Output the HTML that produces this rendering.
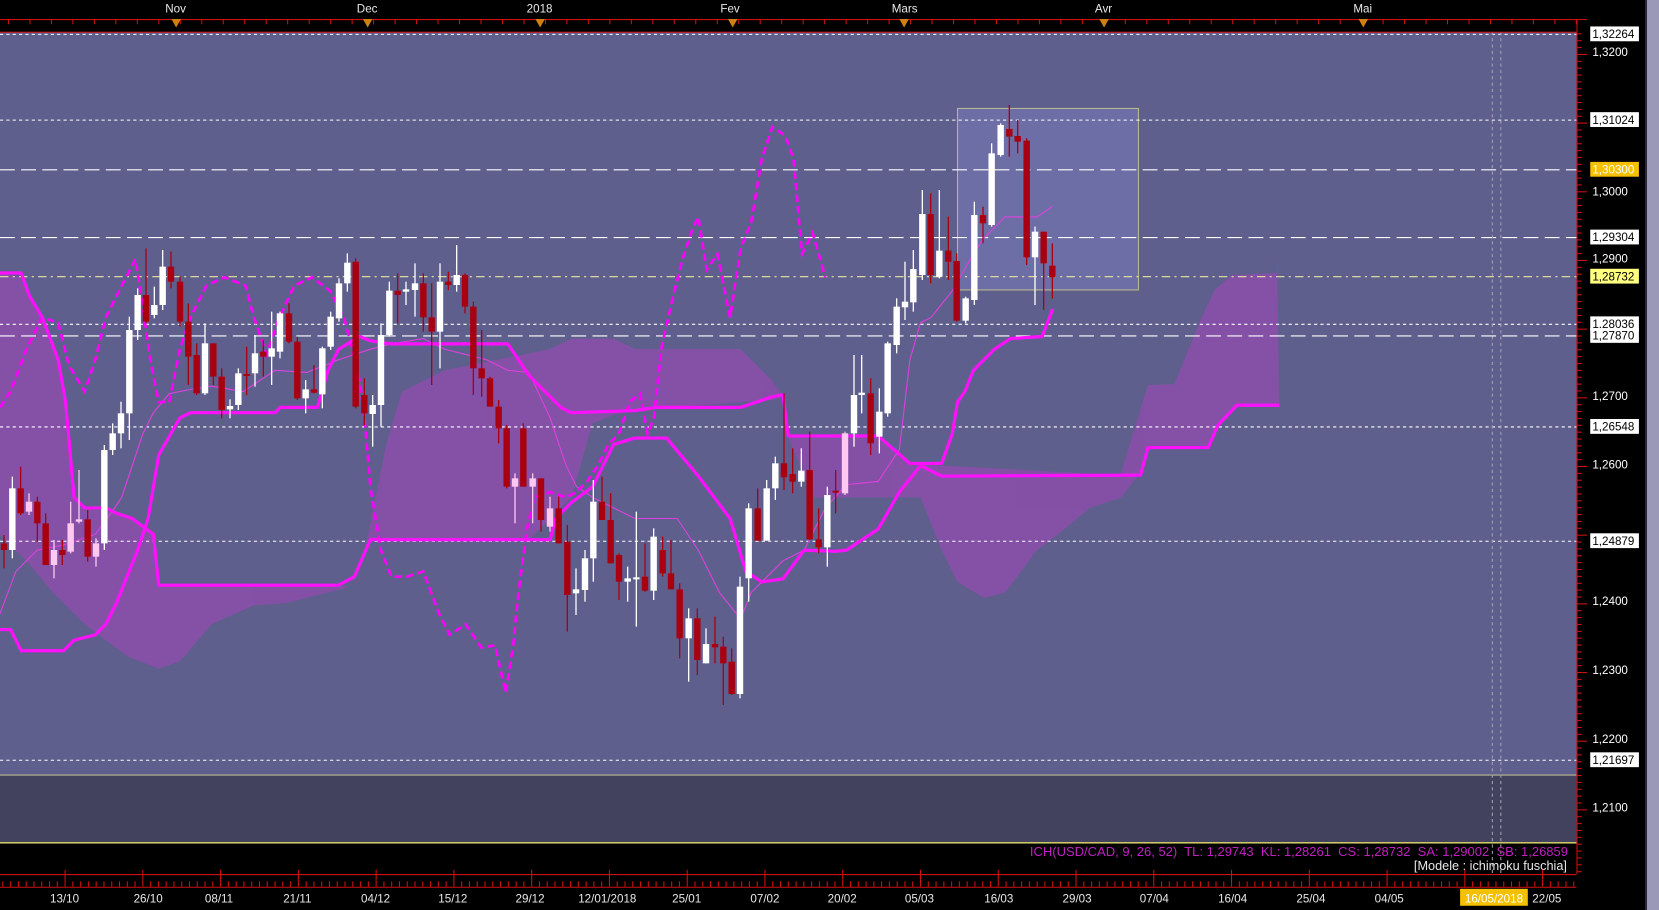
<!DOCTYPE html>
<html><head><meta charset="utf-8"><style>
html,body{margin:0;padding:0;background:#000;width:1659px;height:910px;overflow:hidden}
svg{display:block;font-family:"Liberation Sans","DejaVu Sans",sans-serif}
</style></head><body>
<svg id="s" width="1659" height="910" xmlns="http://www.w3.org/2000/svg">
<rect width="1659" height="910" fill="#000"/>
<rect x="1647" y="0" width="12" height="910" fill="#9a9ab8"/>
<rect x="1645" y="0" width="2" height="910" fill="#2a2a3a"/>
<g transform="scale(1.05804,1.05814)">
<rect x="0" y="30" width="1490" height="702" fill="#5f5f8e"/>
<rect x="0" y="732" width="1490" height="64" fill="#42425f"/>
<line x1="0" y1="732.5" x2="1490" y2="732.5" stroke="#b8b890" stroke-width="1"/>
<line x1="0" y1="796.5" x2="1490" y2="796.5" stroke="#e6e070" stroke-width="1.2"/>
<rect x="905" y="102.5" width="171" height="171.5" fill="#6e6ea6" stroke="#b8b890" stroke-width="1"/>
<g fill="#8650a8" opacity="0.95">
<polygon points="0,258 20,262 40,300 55,340 62,380 70,470 80,480 110,485 125,490 145,505 150,553 250,553 320,553 330,555 310,560 270,570 240,572 200,590 170,625 150,632 120,620 80,590 50,560 25,530 0,505"/>
<polygon points="330,555 345,520 355,470 365,420 380,370 420,350 480,338 520,330 540,320 580,320 600,330 700,330 730,360 740,375 730,378 620,386 580,392 560,400 540,470 520,490 500,510 350,510"/>
<polygon points="745,412 800,410 830,412 860,438 890,440 1075,450 1060,470 1030,480 1000,505 980,520 950,560 930,565 905,550 890,520 870,470 840,470 800,470 770,470 760,450"/>
<polygon points="1059,449 1085,364 1110,363 1134,304 1148,274 1164,260 1208,258 1207,244 1209,383 1169,383 1151,402 1142,423 1085,423 1078,449"/>
</g>
<g stroke="#fff" stroke-width="1" fill="none">
<line x1="0" y1="32.5" x2="1490" y2="32.5" stroke-dasharray="3,3"/>
<line x1="0" y1="113.5" x2="1490" y2="113.5" stroke-dasharray="3,3"/>
<line x1="0" y1="160.5" x2="1490" y2="160.5" stroke-dasharray="14,6"/>
<line x1="0" y1="224.5" x2="1490" y2="224.5" stroke-dasharray="14,6"/>
<line x1="0" y1="261.5" x2="1490" y2="261.5" stroke="#e8e8a0" stroke-dasharray="8,4,2,4"/>
<line x1="0" y1="306.5" x2="1490" y2="306.5" stroke-dasharray="3,3"/>
<line x1="0" y1="317.5" x2="1490" y2="317.5" stroke-dasharray="14,6"/>
<line x1="0" y1="403.5" x2="1490" y2="403.5" stroke-dasharray="3,3"/>
<line x1="0" y1="511.5" x2="1490" y2="511.5" stroke-dasharray="3,3"/>
<line x1="0" y1="718.5" x2="1490" y2="718.5" stroke-dasharray="3,3"/>
</g>
<g stroke="#a0a0b0" stroke-width="1" stroke-dasharray="3,3">
<line x1="1410.5" y1="30" x2="1410.5" y2="826"/>
<line x1="1418.5" y1="30" x2="1418.5" y2="826"/>
</g>
<polyline fill="none" stroke="#e040e0" stroke-width="1" points="0,580 15,540 35,520 60,515 90,505 105,485 115,470 125,440 135,410 145,390 160,372 180,368 200,365 230,370 260,350 290,352 320,340 350,330 370,325 400,320 420,330 460,340 480,350 500,352 520,395 535,440 545,460 560,470 580,480 600,490 640,490 660,520 680,560 700,585 710,560 720,550 740,530 760,520 780,480 800,458 830,455 850,425 860,340 870,305 880,300 900,275 920,240 930,225 950,205 980,205 995,195"/>
<polyline fill="none" stroke="#ff00ff" stroke-width="2.5" stroke-dasharray="7,4" points="0,385 10,370 25,330 40,300 55,305 65,345 80,370 90,340 100,300 115,270 128,245 135,290 142,340 150,380 160,380 170,330 180,300 195,270 212,262 232,270 240,300 252,335 262,305 278,270 295,262 312,275 325,300 333,330 340,360 345,400 350,460 355,490 360,520 370,545 385,545 400,540 415,580 425,600 440,590 455,612 468,610 478,655 485,610 490,560 498,500 505,470 520,465 535,470 545,465 555,455 565,440 575,420 585,410 595,380 605,372 612,410 618,395 625,330 635,285 645,245 655,215 660,205 668,255 678,240 690,300 700,235 710,210 720,150 730,120 742,128 750,150 758,240 768,220 780,262"/>
<polyline fill="none" stroke="#ff10ff" stroke-width="3" stroke-linejoin="round" points="0,258 20,258 28,280 40,300 55,340 62,380 70,470 80,480 100,480 110,485 125,490 145,505 150,553 320,553 335,545 350,510 520,510 525,490 540,475 560,460 570,440 580,420 600,414 630,414 660,450 690,490 705,540 720,550 740,547 760,520 790,521 800,520 830,500 850,465 870,440 890,450 1078,449 1085,423 1142,423 1151,402 1169,383 1209,383"/>
<polyline fill="none" stroke="#ff10ff" stroke-width="3" stroke-linejoin="round" points="0,595 10,595 20,615 60,615 70,605 90,600 100,590 110,570 120,545 130,520 140,490 150,430 170,395 180,390 260,390 265,385 300,385 310,350 320,330 340,318 350,322 370,325 480,325 490,340 500,355 510,365 530,385 540,390 600,388 620,385 700,385 730,375 740,373 745,412 830,412 860,438 890,438 900,410 905,380 912,370 920,350 930,340 940,330 955,320 985,318 995,292"/>
</g>
<g id="candles"></g>
<g transform="scale(1.05804,1.05814)">
<rect x="0" y="0" width="1505" height="30" fill="#000"/>
<line x1="0" y1="18.5" x2="1490" y2="18.5" stroke="#d01010"/>
<line x1="0" y1="30.5" x2="1490" y2="30.5" stroke="#d01010"/>
<g id="ttick" stroke="#d01010"></g>
<g fill="#e8e8e8" font-size="11" text-anchor="middle">
<text x="166" y="12">Nov</text><text x="347" y="12">Dec</text><text x="510" y="12">2018</text><text x="690" y="12">Fev</text><text x="855" y="12">Mars</text><text x="1043" y="12">Avr</text><text x="1288" y="12">Mai</text>
</g>
<g fill="#d08010">
<polygon points="162,18 171,18 166.5,26"/><polygon points="343,18 352,18 347.5,26"/><polygon points="506,18 515,18 510.5,26"/><polygon points="688,18 697,18 692.5,26"/><polygon points="850,18 859,18 854.5,26"/><polygon points="1039,18 1048,18 1043.5,26"/><polygon points="1284,18 1293,18 1288.5,26"/>
</g>
<rect x="1490" y="18" width="58" height="842" fill="#000"/>
<line x1="1490.5" y1="18" x2="1490.5" y2="826" stroke="#d01010"/>
<line x1="1490" y1="18.5" x2="1500" y2="18.5" stroke="#d01010"/>
<g id="rtick" stroke="#d01010"></g>
<g font-size="11">
<rect x="1503" y="25" width="46" height="14" fill="#fff"/><text x="1505" y="36" fill="#000">1,32264</text>
<text x="1505" y="53" fill="#fff">1,3200</text>
<rect x="1503" y="106" width="46" height="14" fill="#fff"/><text x="1505" y="117" fill="#000">1,31024</text>
<rect x="1503" y="153" width="46" height="14" fill="#f5c000"/><text x="1505" y="164" fill="#fff">1,30300</text>
<text x="1505" y="185" fill="#fff">1,3000</text>
<rect x="1503" y="217" width="46" height="14" fill="#fff"/><text x="1505" y="228" fill="#000">1,29304</text>
<text x="1505" y="248" fill="#fff">1,2900</text>
<rect x="1503" y="254" width="46" height="14" fill="#ffff80"/><text x="1505" y="265" fill="#000">1,28732</text>
<rect x="1503" y="299" width="46" height="14" fill="#fff"/><text x="1505" y="310" fill="#000">1,28036</text>
<rect x="1503" y="310" width="46" height="14" fill="#fff"/><text x="1505" y="321" fill="#000">1,27870</text>
<text x="1505" y="378" fill="#fff">1,2700</text>
<rect x="1503" y="396" width="46" height="14" fill="#fff"/><text x="1505" y="407" fill="#000">1,26548</text>
<text x="1505" y="443" fill="#fff">1,2600</text>
<rect x="1503" y="504" width="46" height="14" fill="#fff"/><text x="1505" y="515" fill="#000">1,24879</text>
<text x="1505" y="572" fill="#fff">1,2400</text>
<text x="1505" y="637" fill="#fff">1,2300</text>
<text x="1505" y="702" fill="#fff">1,2200</text>
<rect x="1503" y="711" width="46" height="14" fill="#fff"/><text x="1505" y="722" fill="#000">1,21697</text>
<text x="1505" y="767" fill="#fff">1,2100</text>
</g>
<text x="1482" y="809" font-size="12.3" fill="#c020c0" text-anchor="end" xml:space="preserve">ICH(USD/CAD, 9, 26, 52)  TL: 1,29743  KL: 1,28261  CS: 1,28732  SA: 1,29002  SB: 1,26859</text>
<text x="1481" y="822" font-size="12" fill="#e8e8e8" text-anchor="end">[Modele : ichimoku fuschia]</text>
<line x1="0" y1="826.5" x2="1490" y2="826.5" stroke="#d01010"/>
<line x1="0" y1="838.5" x2="1490" y2="838.5" stroke="#d01010"/>
<g id="btick" stroke="#d01010"></g>
<rect x="1380" y="840" width="64" height="16" fill="#f5c000"/>
<g fill="#e8e8e8" font-size="11" text-anchor="middle">
<text x="61" y="853">13/10</text><text x="140" y="853">26/10</text><text x="207" y="853">08/11</text><text x="281" y="853">21/11</text><text x="355" y="853">04/12</text><text x="428" y="853">15/12</text><text x="501" y="853">29/12</text><text x="574" y="853">12/01/2018</text><text x="649" y="853">25/01</text><text x="723" y="853">07/02</text><text x="796" y="853">20/02</text><text x="869" y="853">05/03</text><text x="944" y="853">16/03</text><text x="1018" y="853">29/03</text><text x="1091" y="853">07/04</text><text x="1165" y="853">16/04</text><text x="1239" y="853">25/04</text><text x="1313" y="853">04/05</text><text x="1462" y="853">22/05</text>
<text x="1412" y="853" fill="#fff">16/05/2018</text>
</g>
</g>
</svg>
<script>
(function(){
var NS="http://www.w3.org/2000/svg";
var g=document.getElementById("candles");
function add(x,bt,bb,wt,wb,col){
 var l=document.createElementNS(NS,"line");
 l.setAttribute("x1",x);l.setAttribute("x2",x);l.setAttribute("y1",wt);l.setAttribute("y2",wb);
 l.setAttribute("stroke",col);l.setAttribute("stroke-width","1.3");g.appendChild(l);
 var r=document.createElementNS(NS,"rect");
 r.setAttribute("x",x-3.2);r.setAttribute("y",bt);r.setAttribute("width",6.4);r.setAttribute("height",Math.max(2,bb-bt));
 r.setAttribute("fill",col);g.appendChild(r);
}
var R="#a80010",W="#ffffff",P="#ffc8f0";
var z5=[[12,910,930,885,985,R],[37,745,930,710,955,W],[62,745,820,680,825,R],[87,785,815,760,825,P],[112,785,850,770,905,R],[137,850,975,820,975,R],[162,930,975,900,1015,P],[187,930,945,900,975,R],[212,850,935,785,940,P],[237,838,845,690,850,P],[263,838,950,810,965,R],[288,910,950,895,980,P],[313,630,910,615,930,W],[338,580,630,550,645,W],[363,520,580,485,625,W],[388,270,520,230,600,W],[413,165,270,145,300,W],[438,165,245,25,250,R],[463,195,225,140,235,W],[488,80,195,30,210,W],[513,80,125,35,145,R],[540,125,245,110,260,R],[565,245,350,190,435,R],[590,345,460,310,465,R],[615,310,460,250,465,W],[640,310,410,310,435,R],[665,410,510,385,535,R],[690,498,508,478,535,W],[715,400,495,385,510,W],[740,402,405,320,465,R],[765,340,400,285,440,W],[790,335,350,300,410,R],[815,325,350,215,435,W],[840,220,335,215,355,W],[867,220,305,190,310,R],[892,305,475,290,480,R],[917,448,475,420,520,W],[942,448,458,375,460,R],[967,325,463,320,505,W],[992,230,320,215,330,W],[1017,130,235,115,245,W],[1042,68,130,40,155,W],[1067,65,500,55,505,R],[1093,465,520,415,555,R],[1118,495,522,465,620,W],[1143,285,495,250,560,W],[1168,152,285,125,290,W],[1193,152,165,100,250,R],[1218,148,155,125,195,W],[1245,130,150,70,230,W],[1270,130,232,100,275,R],[1295,232,275,130,435,R],[1320,125,275,70,385,W],[1345,125,135,95,150,R],[1370,105,135,15,155,W],[1395,105,200,100,220,R],[1420,200,385,185,465,R],[1445,385,415,270,470,R],[1470,415,500,410,500,R],[1496,500,565,480,610,R],[1520,565,740,555,745,R],[1545,715,740,700,850,P]];
z5.forEach(function(c){add(c[0]/3,240+c[1]/3,240+c[2]/3,240+c[3]/3,240+c[4]/3,c[5]);});
var z6=[[70,145,320,130,320,R],[98,295,320,280,430,P],[123,295,420,295,455,R],[150,385,440,350,455,P],[176,385,490,350,490,R],[202,485,645,435,755,R],[228,628,640,565,705,W],[255,535,630,510,665,W],[280,365,535,300,605,W],[306,365,420,290,420,R],[332,420,550,340,550,R],[357,525,605,520,660,R],[383,595,605,560,665,W],[409,592,596,395,740,W],[435,590,632,490,635,R],[461,470,632,445,660,W],[488,510,580,470,590,R],[513,580,628,480,628,R],[539,628,775,610,835,R],[566,715,775,685,905,W],[592,715,840,685,885,R],[618,792,850,745,850,W],[645,792,802,710,850,R],[670,800,850,770,975,R],[695,845,942,805,945,R],[720,620,942,590,955,W],[746,385,595,370,665,W],[773,385,482,325,482,R],[800,325,482,300,482,W],[826,250,325,230,360,W],[852,250,292,40,330,R],[878,282,305,205,340,R],[904,272,305,205,320,W],[929,270,478,155,480,R],[956,478,502,385,520,R],[982,345,502,320,560,W],[1007,332,338,270,400,R],[1035,160,340,155,345,P]];
z6.forEach(function(c){add(500+c[0]/3,380+c[1]/3,380+c[2]/3,380+c[3]/3,380+c[4]/3,c[5]);});
var z7=[[42,915,1030,795,1070,W],[65,908,915,795,970,W],[92,910,1060,865,1095,R],[118,965,1040,895,1090,W],[143,760,970,755,980,W],[170,650,765,625,790,W],[195,635,652,515,690,W],[220,537,637,480,665,W],[247,372,555,300,570,W],[272,372,555,310,580,R],[298,482,560,300,565,W],[325,482,515,380,570,R],[350,513,692,490,695,R],[377,625,692,620,700,W],[403,375,630,335,645,W],[429,375,400,350,460,R],[455,190,405,160,410,W],[482,105,195,100,200,W],[508,117,140,45,200,R],[533,138,155,90,190,R],[560,152,502,145,525,R],[585,425,502,410,645,W],[611,425,520,425,660,R],[637,527,562,460,625,R]];
z7.forEach(function(c){add(840+c[0]/3,90+c[1]/3,90+c[2]/3,90+c[3]/3,90+c[4]/3,c[5]);});
function ticks(id,fn){var e=document.getElementById(id);fn(function(x1,y1,x2,y2){var l=document.createElementNS(NS,"line");l.setAttribute("x1",x1);l.setAttribute("y1",y1);l.setAttribute("x2",x2);l.setAttribute("y2",y2);e.appendChild(l);});}
ticks("ttick",function(L){for(var x=8;x<1490;x+=20.3){L(x,18,x,23);}});
ticks("btick",function(L){for(var i=0;i<400;i++){var x=-12+i*7.35;if(x>1490)break;var big=(i%10==0);L(x,big?822:833,x,838);} });
ticks("rtick",function(L){for(var y=32;y<826;y+=6.49){var big=Math.abs(((y-49)/64.9)-Math.round((y-49)/64.9))<0.05;L(1490,y,big?1500:1495,y);}});
})();
</script>
</body></html>
